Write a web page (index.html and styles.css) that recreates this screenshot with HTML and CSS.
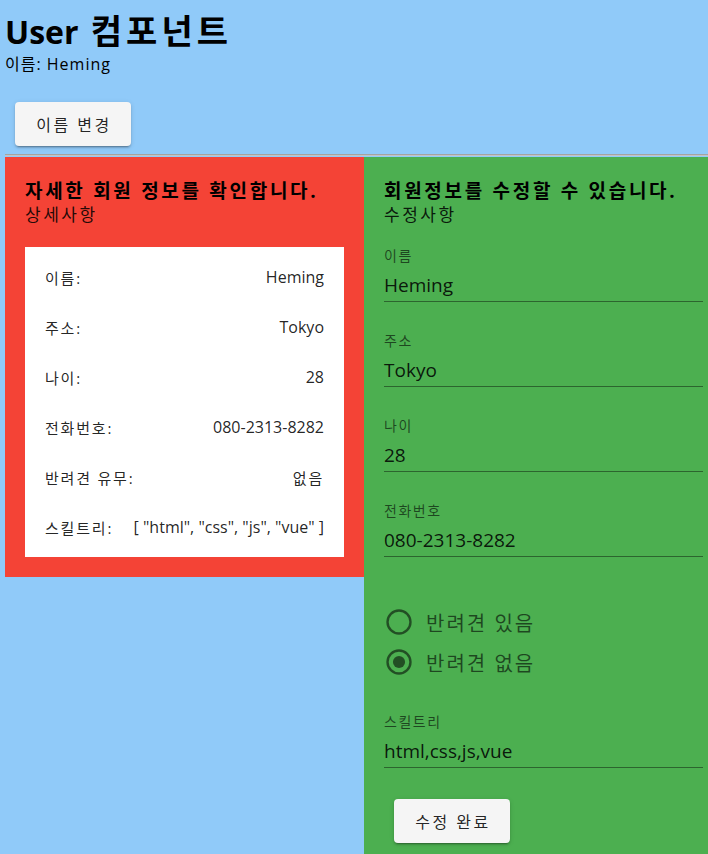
FILE: index.html
```html
<!DOCTYPE html>
<html lang="ko">
<head>
<meta charset="utf-8">
<title>User 컴포넌트</title>
<link rel="stylesheet" href="styles.css">
</head>
<body>
<div class="page">
  <h1 class="title">User <span class="title-ko">컴포넌트</span></h1>
  <p class="name-line">이름: Heming</p>
  <button class="btn btn-top" type="button">이름 변경</button>
</div>
<hr class="divider">
<div class="row">
  <section class="panel panel-detail">
    <h2 class="panel-title">자세한 회원 정보를 확인합니다.</h2>
    <p class="panel-sub">상세사항</p>
    <div class="card">
      <div class="card-row"><span class="card-key">이름:</span><span>Heming</span></div>
      <div class="card-row"><span class="card-key">주소:</span><span>Tokyo</span></div>
      <div class="card-row"><span class="card-key">나이:</span><span>28</span></div>
      <div class="card-row"><span class="card-key">전화번호:</span><span>080-2313-8282</span></div>
      <div class="card-row"><span class="card-key">반려견 유무:</span><span class="card-key">없음</span></div>
      <div class="card-row"><span class="card-key">스킬트리:</span><span>[ "html", "css", "js", "vue" ]</span></div>
    </div>
  </section>
  <section class="panel panel-edit">
    <h2 class="panel-title">회원정보를 수정할 수 있습니다.</h2>
    <p class="panel-sub">수정사항</p>
    <div class="field">
      <div class="field-label">이름</div>
      <div class="field-value">Heming</div>
    </div>
    <div class="field">
      <div class="field-label">주소</div>
      <div class="field-value">Tokyo</div>
    </div>
    <div class="field">
      <div class="field-label">나이</div>
      <div class="field-value">28</div>
    </div>
    <div class="field">
      <div class="field-label">전화번호</div>
      <div class="field-value">080-2313-8282</div>
    </div>
    <div class="radios">
      <div class="radio">
        <svg class="radio-icon" viewBox="0 0 24 24" width="26" height="26"><circle cx="12" cy="12" r="10.6" fill="none" stroke="currentColor" stroke-width="2.2"/></svg>
        <span>반려견 있음</span>
      </div>
      <div class="radio">
        <svg class="radio-icon" viewBox="0 0 24 24" width="26" height="26"><circle cx="12" cy="12" r="10.6" fill="none" stroke="currentColor" stroke-width="2.2"/><circle cx="12" cy="12" r="5.6" fill="currentColor"/></svg>
        <span>반려견 없음</span>
      </div>
    </div>
    <div class="field field-skill">
      <div class="field-label">스킬트리</div>
      <div class="field-value">html,css,js,vue</div>
    </div>
    <button class="btn btn-save" type="button">수정 완료</button>
  </section>
</div>
</body>
</html>
```
FILE: styles.css
```css
html {
  overflow-x: hidden;
}
body {
  margin: 0;
  background: #90caf9;
  font-family: "Open Sans", "Noto Sans CJK KR", sans-serif;
  color: rgba(0, 0, 0, 0.87);
}
.page {
  padding-left: 5px;
}
.title {
  margin: 0;
  padding-top: 11px;
  height: 40px;
  font-size: 32px;
  line-height: 40px;
  font-weight: 700;
  color: #000;
}
.title-ko {
  font-size: 34px;
  letter-spacing: 4px;
  margin-left: 4px;
}
.name-line {
  margin: 1px 0 0;
  height: 24px;
  font-size: 16px;
  line-height: 24px;
  letter-spacing: 1px;
  color: #000;
}
.btn {
  display: block;
  width: 116px;
  height: 44px;
  border: none;
  border-radius: 4px;
  background: #f5f5f5;
  font-family: "Open Sans", "Noto Sans CJK KR", sans-serif;
  font-size: 16px;
  letter-spacing: 2.5px;
  color: rgba(0, 0, 0, 0.87);
  box-shadow: 0 3px 1px -2px rgba(0,0,0,.2), 0 2px 2px 0 rgba(0,0,0,.14), 0 1px 5px 0 rgba(0,0,0,.12);
  padding: 0 0 0 2px;
}
.btn-top {
  margin: 26px 0 0 10px;
}
.divider {
  margin: 8px 0 1px 5px;
  height: 0;
  border: none;
  border-top: 1px solid #a3a3a3;
  border-bottom: 1px solid #c4c4c4;
}
.row {
  display: flex;
  align-items: flex-start;
  margin-left: 5px;
  width: 718px;
}
.panel {
  width: 359px;
  flex: none;
  box-sizing: border-box;
  padding: 22px 20px 20px;
}
.panel-detail {
  background: #f44336;
}
.panel-edit {
  background: #4caf50;
  min-height: 720px;
}
.panel-title {
  margin: 0;
  height: 24px;
  font-size: 19px;
  line-height: 24px;
  font-weight: 700;
  letter-spacing: 2.7px;
  color: #000;
}
.panel-sub {
  margin: 0;
  height: 24px;
  font-size: 17px;
  line-height: 24px;
  letter-spacing: 2.5px;
  color: rgba(0, 0, 0, 0.87);
}
.card {
  margin-top: 20px;
  background: #fff;
  padding: 5px 20px;
}
.card-row {
  display: flex;
  justify-content: space-between;
  align-items: center;
  height: 50px;
  font-size: 16px;
  color: rgba(0, 0, 0, 0.87);
}
.card-key {
  font-size: 15px;
  letter-spacing: 1.8px;
}
.field {
  margin-top: 30px;
  border-bottom: 1px solid rgba(0, 0, 0, 0.42);
  padding-bottom: 3px;
}
.panel-sub + .field {
  margin-top: 20px;
}
.field-label {
  height: 18px;
  font-size: 14px;
  line-height: 18px;
  letter-spacing: 1.5px;
  color: rgba(0, 0, 0, 0.6);
}
.field-value {
  margin-top: 7px;
  height: 26px;
  font-size: 19px;
  line-height: 26px;
  color: rgba(0, 0, 0, 0.87);
}
.radios {
  margin-top: 45px;
}
.radio {
  display: flex;
  align-items: center;
  height: 40px;
  font-size: 20px;
  letter-spacing: 2px;
  color: rgba(0, 0, 0, 0.6);
}
.radio-icon {
  margin-left: 2px;
  margin-right: 14px;
  color: rgba(0, 0, 0, 0.55);
}
.field.field-skill {
  margin-top: 31px;
}
.btn-save {
  margin: 31px 0 0 10px;
}
```
